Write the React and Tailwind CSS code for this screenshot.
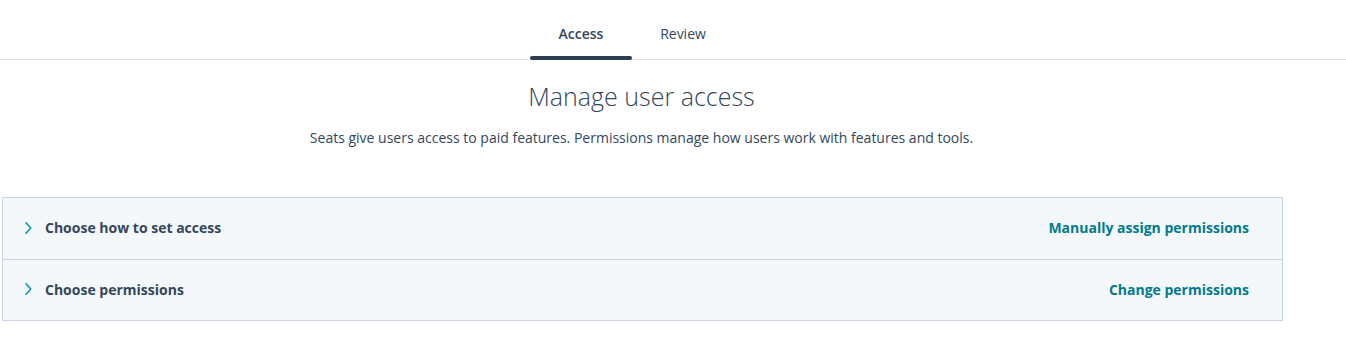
const rows = [
    { label: 'Choose how to set access', action: 'Manually assign permissions' },
    { label: 'Choose permissions', action: 'Change permissions' },
];

const Chevron = () => (
    <svg width="10" height="14" viewBox="0 0 10 14" fill="none" className="shrink-0">
        <path d="M3 1.8 L7.8 7 L3 12.2" stroke="#0091ae" strokeWidth="1.5" strokeLinecap="round" strokeLinejoin="round" />
    </svg>
);

const App = () => {
    return (
        <div className="w-[1346px] h-[362px] bg-white text-[#33475b] font-['Open_Sans',sans-serif]">
            <div className="border-b border-[#dfe3eb] h-[60px] flex items-end">
                <div className="flex ml-[530px]">
                    <div className="w-[102px] flex flex-col items-center">
                        <span className="text-[14px] font-semibold leading-[20px] pb-[12px]">Access</span>
                        <div className="h-[4px] w-full rounded-full bg-[#2d3e50] -mb-[1px]"></div>
                    </div>
                    <div className="w-[102px] flex flex-col items-center">
                        <span className="text-[14px] leading-[20px] pb-[15px]">Review</span>
                    </div>
                </div>
            </div>

            <div className="w-[1283px] flex flex-col items-center">
                <h1 className="text-[25px] font-light leading-[32px] mt-[20px]">Manage user access</h1>
                <p className="text-[14px] leading-[20px] mt-[16px]">
                    Seats give users access to paid features. Permissions manage how users work with features and tools.
                </p>
            </div>

            <div className="ml-[2px] mt-[49px] w-[1281px] border border-[#cbd6e2] bg-[#f5f8fa]">
                {rows.map((row, i) => (
                    <div
                        key={row.label}
                        className={`h-[61px] flex items-center justify-between pl-[20px] pr-[33px] pb-[2px] ${i > 0 ? 'border-t border-[#cbd6e2]' : ''}`}
                    >
                        <div className="flex items-center gap-[12px]">
                            <Chevron />
                            <span className="text-[14px] font-bold">{row.label}</span>
                        </div>
                        <span className="text-[14px] font-bold text-[#007a8c]">{row.action}</span>
                    </div>
                ))}
            </div>
        </div>
    );
};

export default App;
